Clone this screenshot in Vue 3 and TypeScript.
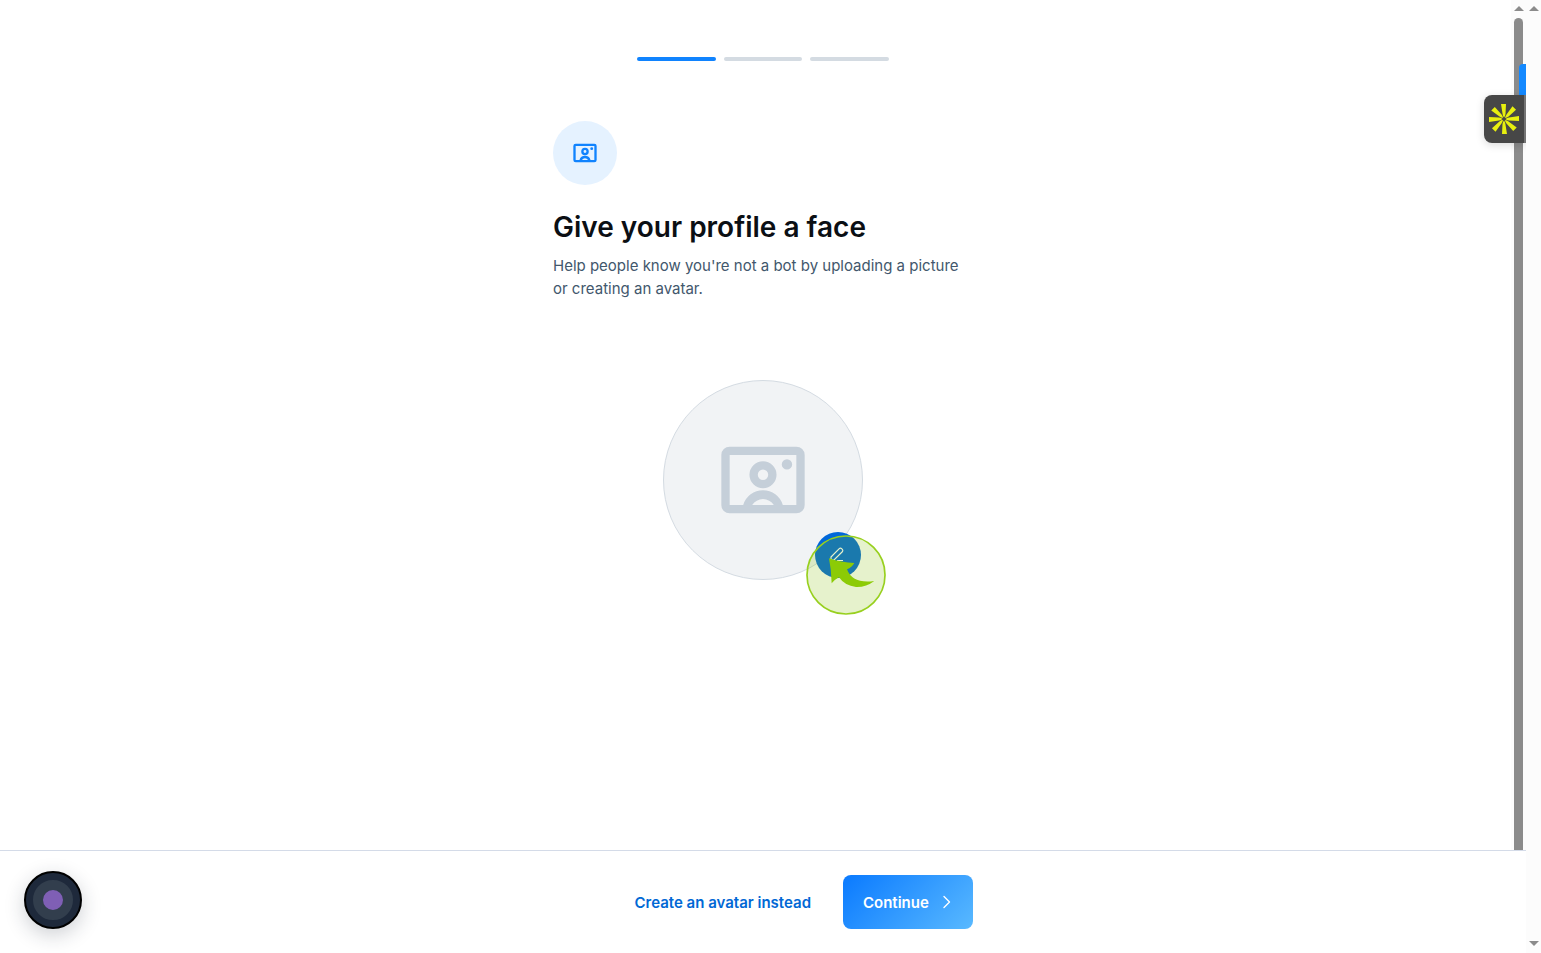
<script setup lang="ts">
import { ref } from 'vue'

const steps = 3
const current = ref(1)
const rays = [0, 45, 90, 135, 180, 225, 270, 315]
const framePath =
  'M4 4h16a2 2 0 0 1 2 2v12a2 2 0 0 1-2 2H4a2 2 0 0 1-2-2V6a2 2 0 0 1 2-2Zm0 2v12h3.25a4.95 4.95 0 0 1 9.5 0H20V6H4Zm5.4 12h5.2a3.1 3.1 0 0 0-5.2 0ZM12 7.5a3.25 3.25 0 1 1 0 6.5 3.25 3.25 0 0 1 0-6.5Zm0 2a1.25 1.25 0 1 0 0 2.5 1.25 1.25 0 0 0 0-2.5ZM17.75 7a1.25 1.25 0 1 1 0 2.5 1.25 1.25 0 0 1 0-2.5Z'
</script>

<template>
  <div class="window">
    <div class="page">
      <main class="content">
        <div class="column">
          <div class="progress" role="progressbar" aria-label="Setup progress" aria-valuemin="1" :aria-valuemax="steps" :aria-valuenow="current">
            <span v-for="n in steps" :key="n" class="step" :class="{ active: n <= current }"></span>
          </div>
          <div class="badge">
            <svg class="badge-icon" viewBox="0 0 24 24" aria-hidden="true"><path fill-rule="evenodd" :d="framePath" /></svg>
          </div>
          <h1>Give your profile a face</h1>
          <p>Help people know you're not a bot by uploading a picture or creating an avatar.</p>
          <div class="avatar">
            <svg class="avatar-icon" viewBox="0 0 24 24" aria-hidden="true"><path fill-rule="evenodd" :d="framePath" /></svg>
            <button class="edit" type="button" aria-label="Edit picture">
              <svg viewBox="0 0 18 18" aria-hidden="true">
                <path d="M2 11 10.3 2.7a1.6 1.6 0 0 1 2.3 0l.7.7a1.6 1.6 0 0 1 0 2.3L5 14H2zM8 14.5h6" />
              </svg>
            </button>
            <svg class="pointer" viewBox="0 0 240 240" aria-hidden="true">
              <circle class="halo" cx="120" cy="120" r="118" />
              <circle class="ring" cx="120" cy="120" r="117" />
              <path class="arrow" d="M69 70Q107 83 145 84Q138 97 123 103Q139 147 205 138Q180 157 150 156Q116 152 99 127Q87 133 77 145Q76 105 69 70Z" />
            </svg>
          </div>
        </div>
        <div class="inner-scroll" aria-hidden="true">
          <i class="up"></i>
          <span class="thumb"></span>
        </div>
        <span class="side-tab" aria-hidden="true"></span>
        <button class="widget" type="button" aria-label="Open assistant">
          <svg viewBox="-16 -16 32 32" aria-hidden="true">
            <path v-for="a in rays" :key="a" :transform="`rotate(${a})`" d="M-3-15H2L1.5-5Q1.2-2.5 0-1.5-1.2-3-1.4-5Z" />
          </svg>
        </button>
      </main>
      <footer>
        <div class="actions">
          <button class="link" type="button">Create an avatar instead</button>
          <button class="continue" type="button">
            <span>Continue</span>
            <svg viewBox="0 0 16 16" aria-hidden="true"><path d="m5 2.5 5.5 5.5L5 13.5" /></svg>
          </button>
        </div>
        <button class="recorder" type="button" aria-label="Recorder"><span></span></button>
      </footer>
    </div>
    <div class="outer-scroll" aria-hidden="true">
      <i class="up"></i>
      <i class="down"></i>
    </div>
  </div>
</template>

<style>
body {
  margin: 0;
  background: #fff;
}
</style>

<style scoped>
* {
  box-sizing: border-box;
}
button {
  border: 0;
  padding: 0;
  background: none;
  font: inherit;
  cursor: pointer;
}
svg {
  display: block;
}
.window {
  display: flex;
  height: 100vh;
  overflow: hidden;
  font-family: Inter, 'Liberation Sans', sans-serif;
  color: #0b0f14;
}
.page {
  flex: 1;
  min-width: 0;
  display: flex;
  flex-direction: column;
}
.content {
  position: relative;
  flex: 1;
  min-height: 0;
  display: flex;
  justify-content: center;
  overflow: hidden;
}
.column {
  width: 100%;
  max-width: 420px;
  padding-top: 57px;
  display: flex;
  flex-direction: column;
}
.progress {
  display: flex;
  gap: 8px;
  width: 60%;
  margin: 0 auto 60px;
}
.step {
  flex: 1;
  height: 4px;
  border-radius: 2px;
  background: #d4dbe2;
}
.step.active {
  background: #1083fe;
}
.badge {
  display: grid;
  place-items: center;
  width: 64px;
  height: 64px;
  border-radius: 50%;
  background: #e5f2ff;
}
.badge-icon {
  width: 28px;
  height: 28px;
  fill: #1083fe;
}
h1 {
  margin: 24px 0 8px;
  font-size: 28px;
  line-height: 37px;
  font-weight: 600;
}
p {
  margin: 0;
  font-size: 15px;
  line-height: 23px;
  color: #42576c;
}
.avatar {
  position: relative;
  display: grid;
  place-items: center;
  width: 200px;
  height: 200px;
  margin: 80px auto 0;
  border: 1px solid #d4dbe2;
  border-radius: 50%;
  background: #f1f3f5;
}
.avatar-icon {
  width: 100px;
  height: 100px;
  fill: #c5cfd9;
}
.edit {
  position: absolute;
  right: 1px;
  bottom: 1px;
  display: grid;
  place-items: center;
  width: 46px;
  height: 46px;
  border-radius: 50%;
  background: #0168d9;
}
.edit svg {
  width: 18px;
  height: 18px;
  fill: none;
  stroke: #fff;
  stroke-width: 1.2;
}
.pointer {
  position: absolute;
  right: -24px;
  bottom: -36px;
  width: 80px;
  height: 80px;
  pointer-events: none;
}
.halo {
  fill: rgba(130, 190, 0, 0.2);
}
.ring {
  fill: none;
  stroke: #98d01f;
  stroke-width: 5;
}
.arrow {
  fill: #8ccb06;
}
.inner-scroll {
  position: absolute;
  top: 0;
  right: 0;
  bottom: 0;
  width: 15px;
  display: flex;
  flex-direction: column;
  align-items: center;
  background: #fcfcfc;
}
.thumb {
  flex: 1;
  width: 9px;
  margin-top: 7px;
  border-radius: 5px 5px 0 0;
  background: #8b8b8b;
}
.up,
.down {
  width: 0;
  height: 0;
  border: 5px solid transparent;
}
.up {
  margin-top: 6px;
  border-top: 0;
  border-bottom-color: #8b8b8b;
}
.down {
  margin-bottom: 7px;
  border-bottom: 0;
  border-top-color: #8b8b8b;
}
.outer-scroll {
  width: 15px;
  display: flex;
  flex-direction: column;
  align-items: center;
  justify-content: space-between;
  background: #fcfcfc;
}
.side-tab {
  position: absolute;
  top: 64px;
  right: 0;
  width: 7px;
  height: 40px;
  border-radius: 4px 0 0 4px;
  background: #1489ff;
}
.widget {
  position: absolute;
  top: 95px;
  right: 0;
  width: 42px;
  height: 48px;
  padding-left: 4px;
  border-right: 2px solid #747474;
  border-radius: 8px 0 0 8px;
  background: #474747;
  box-shadow: 0 2px 8px rgba(0, 0, 0, 0.15);
}
.widget svg {
  width: 32px;
  height: 32px;
  fill: #e8f00f;
}
footer {
  position: relative;
  display: flex;
  justify-content: center;
  padding: 24px 0;
  border-top: 1px solid #d4dbe8;
  background: #fff;
}
.actions {
  width: 100%;
  max-width: 420px;
  display: flex;
  align-items: center;
  justify-content: flex-end;
  gap: 32px;
  font-size: 15px;
  line-height: 21px;
  font-weight: 600;
}
.link {
  color: #0168d5;
}
.continue {
  display: flex;
  align-items: center;
  justify-content: space-between;
  width: 130px;
  height: 54px;
  padding: 0 18px 0 20px;
  border-radius: 8px;
  background: linear-gradient(135deg, #0a7aff, #59b9ff);
  color: #fff;
}
.continue svg {
  width: 16px;
  height: 16px;
  fill: none;
  stroke: #fff;
  stroke-width: 1.4;
  stroke-linecap: round;
  stroke-linejoin: round;
}
.recorder {
  position: absolute;
  left: 24px;
  top: 20px;
  display: grid;
  place-items: center;
  width: 58px;
  height: 58px;
  border: 2px solid #000;
  border-radius: 50%;
  background: #1e293b;
  box-shadow: 0 6px 20px rgba(30, 41, 59, 0.22);
}
.recorder span {
  width: 40px;
  height: 40px;
  border: 10px solid #323e4d;
  border-radius: 50%;
  background: #7f5fb5;
}
</style>
